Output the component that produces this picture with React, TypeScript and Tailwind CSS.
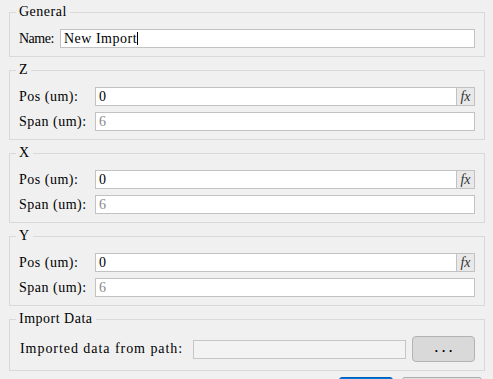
import React from 'react';

const Group = ({ title, children }: { title: string; children: React.ReactNode }) => (
  <fieldset className="border border-[#d9d9d9] px-[9px] pt-[10px] pb-[8px]">
    <legend className="ml-[-3px] px-[3px] leading-[14px]">{title}</legend>
    {children}
  </fieldset>
);

const Field = ({ value, muted, caret }: { value: string; muted?: boolean; caret?: boolean }) => (
  <div
    className={`flex h-[19px] flex-1 items-center border border-[#c2c2c2] bg-white px-[3px] ${
      muted ? 'text-[#8a8a8a]' : 'text-black'
    }`}
  >
    <span>{value}</span>
    {caret && <span className="h-[13px] w-px bg-black" />}
  </div>
);

const FxField = ({ value }: { value: string }) => (
  <div className="flex h-[19px] flex-1 border border-[#c2c2c2] bg-white">
    <div className="flex flex-1 items-center px-[3px]">{value}</div>
    <div className="flex w-[18px] items-center justify-center border-l border-[#c2c2c2] bg-[#e9e9e9] text-[14px] italic leading-none tracking-normal text-[#333]">
      fx
    </div>
  </div>
);

const AxisGroup = ({ axis }: { axis: string }) => (
  <Group title={axis}>
    <div className="flex flex-col gap-[6px]">
      <div className="flex items-center">
        <span className="w-[76px] shrink-0">Pos (um):</span>
        <FxField value="0" />
      </div>
      <div className="flex items-center">
        <span className="w-[76px] shrink-0">Span (um):</span>
        <Field value="6" muted />
      </div>
    </div>
  </Group>
);

export default function App() {
  return (
    <div className="h-[379px] overflow-hidden bg-[#f0f0f0] font-[family-name:'Liberation_Serif',serif] text-[14px] leading-[16px] tracking-[0.5px] text-black">
      <div className="flex flex-col gap-[6px] pt-[5px] pl-[9px] pr-[8px]">
        <Group title="General">
          <div className="flex items-center">
            <span className="w-[41px] shrink-0 tracking-[-0.5px]">Name:</span>
            <Field value="New Import" caret />
          </div>
        </Group>

        <AxisGroup axis="Z" />
        <AxisGroup axis="X" />
        <AxisGroup axis="Y" />

        <Group title="Import Data">
          <div className="flex items-center">
            <span className="w-[174px] shrink-0 pl-px tracking-[0.95px]">Imported data from path:</span>
            <div className="h-[19px] flex-1 border border-[#c6c6c6] bg-[#f3f3f3]" />
            <button className="ml-[6px] h-[26px] w-[63px] rounded-[4px] border border-[#b3b3b3] bg-[#d9d9d9] font-[family-name:'Liberation_Mono',monospace] text-[12px] font-bold tracking-normal">
              ...
            </button>
          </div>
        </Group>

        {/* dialog buttons, only their top edge shows */}
        <div className="flex justify-end gap-[9px] pr-[3px]">
          <button aria-label="OK" className="h-[24px] w-[54px] rounded-[3px] border border-[#005fb8] bg-[#0078d7]" />
          <button aria-label="Cancel" className="h-[24px] w-[80px] rounded-[3px] border border-[#adadad] bg-[#e1e1e1]" />
        </div>
      </div>
    </div>
  );
}
